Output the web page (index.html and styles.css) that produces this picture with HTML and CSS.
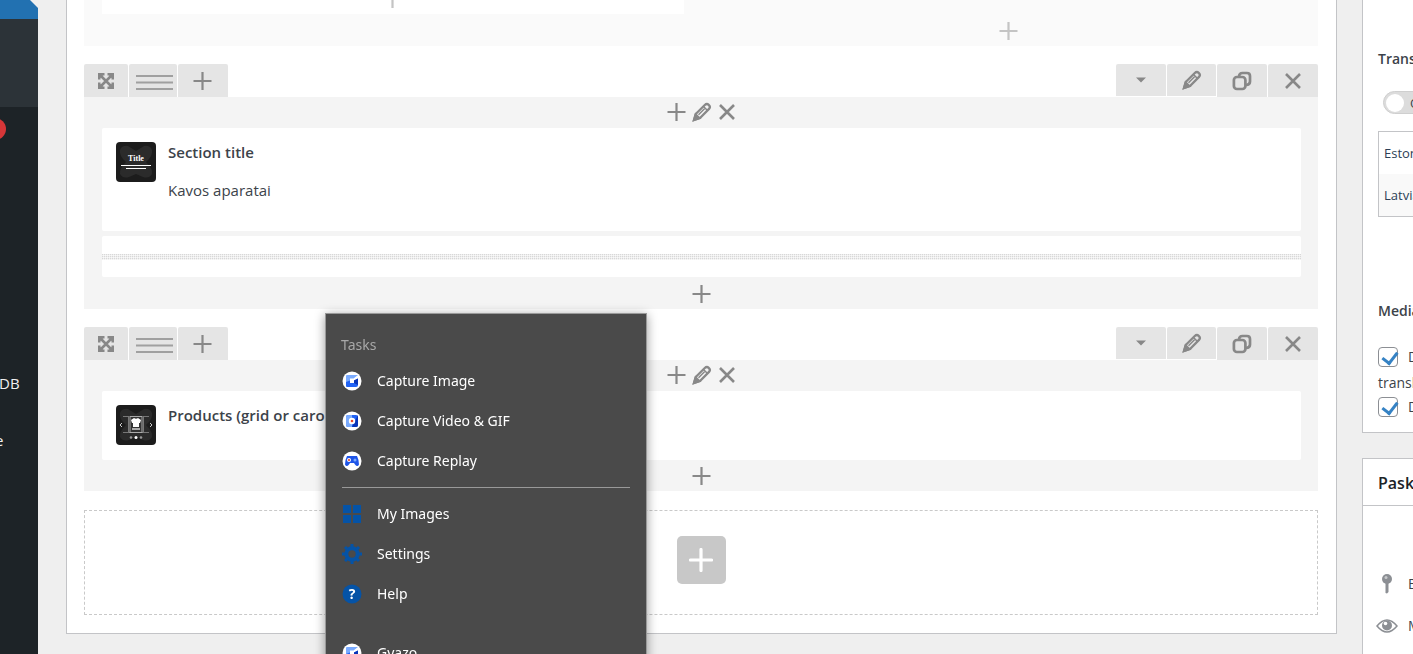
FILE: index.html
```html
<!DOCTYPE html>
<html lang="lt">
<head>
<meta charset="utf-8">
<title>Page builder</title>
<link rel="stylesheet" href="styles.css">
</head>
<body>
<svg class="sprite" aria-hidden="true">
  <symbol id="plus" viewBox="0 0 20 20"><path d="M9.500 1v18M.5 10h18" fill="none" stroke="currentColor" stroke-width="2.200"/></symbol>
  <symbol id="close" viewBox="0 0 20 20"><path d="M3 3l14 14M17 3L3 17" fill="none" stroke="currentColor" stroke-width="2.600"/></symbol>
  <symbol id="pencil" viewBox="0 0 20 20"><path d="M2 18l1.700-6L12.800 3q2-2 3.900-.2 2.200 2 .3 4.100L8 16z" fill="none" stroke="currentColor" stroke-width="2.300"/><path d="M1.500 18.500l2-6.500 4.500 4.300zM11.500 4.500l4 4M6.500 12.800l6-6" stroke="currentColor" stroke-width="1.500" fill="currentColor"/></symbol>
  <symbol id="copy" viewBox="0 0 20 20"><rect x="1.900" y="6" width="11.500" height="12" rx="3" fill="none" stroke="currentColor" stroke-width="2.700"/><path d="M7 5.500Q7.200 2 10.500 2H15q3 0 3 3v5.500q0 3.200-4 3.500" fill="none" stroke="currentColor" stroke-width="2.700"/></symbol>
  <symbol id="caret" viewBox="0 0 20 20"><path d="M5 7.500h10l-5 5z" fill="currentColor"/></symbol>
  <symbol id="expand" viewBox="0 0 20 20"><path d="M4 4l12 12M16 4L4 16" stroke="currentColor" stroke-width="2.600"/><path d="M2 8.500V2h6.500v2.500H7L4.500 7v1.500zM11.500 2H18v6.500h-2.500V7L13 4.500h-1.500zM2 11.500V18h6.500v-2.500H7L4.500 13v-1.500zM18 11.500V18h-6.500v-2.500H13l2.500-2.500v-1.500z" fill="currentColor"/></symbol>
  <symbol id="rows" viewBox="0 0 38 16"><path d="M1 2h37M1 8.500h37M1 15h37" stroke="#a0a0a0" stroke-width="2"/></symbol>
  <symbol id="bow" viewBox="0 0 40 40"><path d="M4 8q2-5 8-4l8 5 8-5q6-1 8 4 1 6-6 12 7 7 6 12-3 5-9 3l-7-3-7 3q-6 2-9-3-1-5 6-12-7-6-6-12z" fill="#2b2b2b"/></symbol>
  <symbol id="gyazo" viewBox="0 0 20 20"><circle cx="10" cy="10" r="9.500" fill="#fff"/><path d="M4 5q0-1 1-1h11l-4.500 3.500H8V12l-4 3z" fill="#7aabff"/><path d="M4 11l4-1.500V12h4V9.500l4-2V14q0 2-2 2H5q-1 0-1-1z" fill="#2264f5"/><path d="M12 9.500l4-2V14l-4-2z" fill="#0a35b8"/></symbol>
</svg>
<div class="page">
  <nav class="sidebar" aria-label="Admin">
    <div class="current"></div>
    <div class="submenu"></div>
    <div class="rest">
      <span class="count"></span>
      <a class="nav-db" href="#">DB</a>
      <a class="nav-e" href="#">e</a>
    </div>
  </nav>

  <main class="builder">
    <section class="split">
      <div class="split-col"><div class="split-card"><button class="ic faint" aria-label="Add"><svg><use href="#plus"/></svg></button></div></div>
      <div class="split-col end"><button class="ic faint" aria-label="Add"><svg><use href="#plus"/></svg></button></div>
    </section>

    <section class="row">
      <div class="tools">
        <button class="tool move" aria-label="Move"><svg><use href="#expand"/></svg></button>
        <button class="tool layout" aria-label="Columns"><svg><use href="#rows"/></svg></button>
        <button class="tool" aria-label="Add"><svg><use href="#plus"/></svg></button>
        <span class="spacer"></span>
        <button class="tool short" aria-label="Toggle"><svg><use href="#caret"/></svg></button>
        <button class="tool short edit" aria-label="Edit"><svg><use href="#pencil"/></svg></button>
        <button class="tool" aria-label="Clone"><svg><use href="#copy"/></svg></button>
        <button class="tool" aria-label="Delete"><svg><use href="#close"/></svg></button>
      </div>
      <div class="column">
        <div class="controls">
          <button class="ic" aria-label="Add"><svg><use href="#plus"/></svg></button>
          <button class="ic" aria-label="Edit"><svg><use href="#pencil"/></svg></button>
          <button class="ic" aria-label="Delete"><svg><use href="#close"/></svg></button>
        </div>
        <article class="card tall">
          <svg class="thumb" viewBox="0 0 40 40"><rect width="40" height="40" rx="4" fill="#1c1c1c"/><use href="#bow"/><text class="thumb-text" x="20" y="19" text-anchor="middle">Title</text><path d="M5 23.500h30M10 26.500h20" stroke="#fff"/></svg>
          <div><h4>Section title</h4><p>Kavos aparatai</p></div>
        </article>
        <div class="divider"><span></span></div>
        <div class="foot"><button class="ic" aria-label="Add"><svg><use href="#plus"/></svg></button></div>
      </div>
    </section>

    <section class="row">
      <div class="tools">
        <button class="tool move" aria-label="Move"><svg><use href="#expand"/></svg></button>
        <button class="tool layout" aria-label="Columns"><svg><use href="#rows"/></svg></button>
        <button class="tool" aria-label="Add"><svg><use href="#plus"/></svg></button>
        <span class="spacer"></span>
        <button class="tool short" aria-label="Toggle"><svg><use href="#caret"/></svg></button>
        <button class="tool short edit" aria-label="Edit"><svg><use href="#pencil"/></svg></button>
        <button class="tool" aria-label="Clone"><svg><use href="#copy"/></svg></button>
        <button class="tool" aria-label="Delete"><svg><use href="#close"/></svg></button>
      </div>
      <div class="column">
        <div class="controls">
          <button class="ic" aria-label="Add"><svg><use href="#plus"/></svg></button>
          <button class="ic" aria-label="Edit"><svg><use href="#pencil"/></svg></button>
          <button class="ic" aria-label="Delete"><svg><use href="#close"/></svg></button>
        </div>
        <article class="card">
          <svg class="thumb" viewBox="0 0 40 40"><rect width="40" height="40" rx="4" fill="#1c1c1c"/><use href="#bow"/><path d="M7 11.500h6M27 11.500h6M7 27.500h26M12.500 11v17M27.500 11v17" stroke="#777"/><rect x="14" y="11.500" width="12" height="16" fill="#333" stroke="#aaa"/><path d="M15 15l3-2q2 1.500 4 0l3 2-1 3h-1v4h-6v-4h-1z" fill="#fff"/><path d="M16 24h8" stroke="#aaa" stroke-width="2"/><path d="M6 18l-2 2 2 2M34 18l2 2-2 2" stroke="#ccc" fill="none"/><circle cx="15" cy="32.500" r="1.300" fill="#999"/><circle cx="20" cy="32.500" r="1.500" fill="#fff"/><circle cx="25" cy="32.500" r="1.300" fill="#999"/></svg>
          <div><h4>Products (grid or carousel)</h4></div>
        </article>
        <div class="foot"><button class="ic" aria-label="Add"><svg><use href="#plus"/></svg></button></div>
      </div>
    </section>

    <div class="drop"><button class="add" aria-label="Add element"><svg viewBox="0 0 24 24"><path d="M12 1.500v21M1.500 12h21" stroke="#fff" stroke-width="3.200" stroke-linecap="round"/></svg></button></div>
  </main>

  <aside class="side">
    <section class="panel languages">
      <h4>Translate</h4>
      <label class="switch"><input type="checkbox" role="switch"><span>Off</span></label>
      <table><tbody><tr><td>Estonian</td></tr><tr><td>Latvian</td></tr></tbody></table>
      <h4 class="media">Media</h4>
      <label class="check"><input type="checkbox" checked><span>Duplicate</span></label>
      <p>translations</p>
      <label class="check"><input type="checkbox" checked><span>Duplicate</span></label>
    </section>
    <section class="panel publish">
      <h2>Paskelbti</h2>
      <div class="meta"><svg viewBox="0 0 22 22"><circle cx="11" cy="6" r="5" fill="#8c8f94"/><path d="M9.500 10h3v9L11 20.500 9.500 20z" fill="#8c8f94"/><circle cx="10" cy="4.500" r="1.500" fill="#c8cacc"/></svg><span>Būsena</span></div>
      <div class="meta"><svg viewBox="0 0 22 22"><path d="M1 11Q11-1 21 11 11 23 1 11z" fill="none" stroke="#8c8f94" stroke-width="1.500"/><circle cx="11" cy="10.500" r="5" fill="#8c8f94"/><circle cx="9.500" cy="8.500" r="1.800" fill="#fff"/></svg><span>Matomumas</span></div>
    </section>
  </aside>
</div>

<div class="jumplist" role="menu">
  <h3>Tasks</h3>
  <button role="menuitem"><svg><use href="#gyazo"/></svg>Capture Image</button>
  <button role="menuitem"><svg viewBox="0 0 20 20"><circle cx="10" cy="10" r="9.500" fill="#fff"/><rect x="4" y="4" width="12" height="12" rx="2" fill="#2264f5"/><path d="M4 6q0-2 2-2h4v12H6q-2 0-2-2z" fill="#7aabff"/><path d="M10 16h4q2 0 2-2V4z" fill="#0a35b8"/><circle cx="10" cy="10" r="3.200" fill="#fff"/><circle cx="10" cy="10" r="1.300" fill="#e8462c"/></svg>Capture Video &amp; GIF</button>
  <button role="menuitem"><svg viewBox="0 0 20 20"><circle cx="10" cy="10" r="9.500" fill="#fff"/><path d="M5 5h10q2 4 2 8.500-1.500 3-4 0L12 12H8l-1 1.500q-2.500 3-4 0Q3 9 5 5z" fill="#1f55e8"/><circle cx="7" cy="9" r="2" fill="#fff"/><circle cx="7" cy="9" r="1.100" fill="#e8462c"/><circle cx="13" cy="9" r="1.500" fill="#7aabff"/></svg>Capture Replay</button>
  <hr>
  <button role="menuitem"><svg viewBox="0 0 20 20"><path d="M1 1h8v8H1zM11 1h8v8h-8zM1 11h8v8H1zM11 11h8v8h-8z" fill="#0553a6"/></svg>My Images</button>
  <button role="menuitem"><svg viewBox="0 0 20 20"><circle cx="10" cy="10" r="5.700" fill="none" stroke="#0553a6" stroke-width="4"/><path d="M10 0v4M10 16v4M0 10h4M16 10h4M3 3l3 3M14 14l3 3M17 3l-3 3M6 14l-3 3" stroke="#0553a6" stroke-width="3"/></svg>Settings</button>
  <button role="menuitem"><svg viewBox="0 0 20 20"><circle cx="10" cy="10" r="9.500" fill="#0553a6"/><text class="q" x="10" y="15" text-anchor="middle">?</text></svg>Help</button>
  <button class="app" role="menuitem"><svg><use href="#gyazo"/></svg>Gyazo</button>
</div>
</body>
</html>
```
FILE: styles.css
```css
* { box-sizing: border-box; }
body { margin: 0; background: #efefef; color: #3c434a; font: 14px/20px "Segoe UI", "Open Sans", "Noto Sans", sans-serif; }
h2, h3, h4, p { margin: 0; }
button { border: 0; padding: 0; background: none; color: inherit; font: inherit; }
button svg { display: block; }
.sprite { position: absolute; width: 0; height: 0; }

.page { display: flex; height: 100vh; overflow: hidden; align-items: flex-start; }

.sidebar { flex: 0 0 38px; align-self: stretch; display: flex; flex-direction: column; overflow: hidden; background: linear-gradient(#efefef 19px, #1d2327 19px); }
.current { height: 19px; background: #2271b1; clip-path: polygon(0 0, 30px 0, 38px 8px, 38px 19px, 0 19px); }
.submenu { height: 88px; background: #2c3338; }
.rest { display: flex; flex-direction: column; align-items: flex-start; padding-top: 11px; }
.count { width: 22px; height: 22px; margin-left: -16px; border-radius: 50%; background: #d63638; }
.rest a { color: #f0f0f1; font-size: 15px; line-height: 20px; text-decoration: none; }
.nav-db { margin: 233px 0 0 -1px; }
.nav-e { margin: 37px 0 0 -5px; }

.builder { flex: 1; min-width: 0; margin-left: 28px; padding: 0 18px 18px 17px; background: #fff; border: solid #c3c4c7; border-width: 0 1px 1px; }
.split { display: grid; grid-template-columns: 1fr 1fr; gap: 35px; height: 46px; padding: 0 18px; background: #fafafa; }
.split-card { display: flex; justify-content: center; align-items: flex-end; height: 14px; padding-bottom: 5px; overflow: hidden; background: #fff; }
.end { display: flex; justify-content: center; align-items: flex-end; padding-bottom: 5px; }
.ic { width: 20px; height: 20px; color: #888; }
.ic svg { width: 20px; height: 20px; }
.faint { color: #c4c4c4; }

.row { margin-top: 18px; }
.tools { display: flex; gap: 1px; height: 33px; }
.tool { display: flex; align-items: center; justify-content: center; width: 50px; height: 33px; color: #888; background: #e5e5e5; border-radius: 2px 2px 0 0; }
.tool svg { width: 20px; height: 20px; }
.move { width: 44px; }
.layout { width: 48px; }
.layout svg { width: 38px; height: 16px; margin: 2px 0 0 1px; }
.short { height: 32px; }
.edit { width: 49px; }
.spacer { flex: 1; }
.column { padding: 0 17px 0 18px; background: #f4f4f4; }
.controls { display: flex; justify-content: center; align-items: flex-start; gap: 5px; height: 31px; padding-top: 5px; }
.card { display: flex; gap: 12px; padding: 14px; background: #fff; border-radius: 2px; min-height: 69px; }
.tall { min-height: 103px; }
.thumb { flex: none; width: 40px; height: 40px; }
.thumb-text { font: bold 8px "Liberation Serif", serif; fill: #fff; }
.card h4 { font-size: 15px; line-height: 20px; font-weight: 600; }
.card p { margin-top: 18px; font-size: 15px; line-height: 20px; }
.divider { display: flex; align-items: center; height: 41px; margin-top: 5px; background: #fff; border-radius: 2px; }
.divider span { flex: 1; height: 6px; background: repeating-linear-gradient(90deg, transparent 0 1px, rgba(255, 255, 255, .6) 1px 2px), repeating-linear-gradient(#d8d8d8 0 1px, #f0f0f0 1px 2px); }
.foot { display: flex; justify-content: center; align-items: flex-start; height: 31px; padding-top: 6px; }
.divider + .foot { height: 32px; padding-top: 7px; }
.drop { display: flex; align-items: center; justify-content: center; height: 105px; margin-top: 19px; border: 1px dashed #c9c9c9; }
.add { display: flex; align-items: center; justify-content: center; width: 49px; height: 48px; margin-bottom: 5px; background: #c8c8c8; border-radius: 5px; }
.add svg { width: 24px; height: 24px; }

.side { flex: 0 0 51px; margin-left: 25px; overflow: hidden; white-space: nowrap; }
.panel { width: 280px; background: #fff; border: 1px solid #c3c4c7; }
.languages { height: 433px; padding: 49px 15px 0; border-top: 0; }
.panel h4 { font-size: 14px; line-height: 20px; font-weight: 600; }
.switch { display: flex; align-items: center; width: 70px; height: 23px; margin: 22px 0 0 5px; padding-left: 2px; gap: 6px; background: #dcdcdc; border: 1px solid #cfcfcf; border-radius: 12px; }
.switch input { appearance: none; flex: none; width: 18px; height: 18px; margin: 0; background: #fff; border-radius: 50%; }
.switch span { font-size: 13px; }
.languages table { width: 248px; height: 86px; margin-top: 17px; border: 1px solid #c3c4c7; border-spacing: 0; font-size: 13px; }
.languages td { height: 42px; padding: 0 5px; color: #2c3f56; }
.languages tr + tr { background: #f9f9f9; }
.panel .media { margin-top: 84px; }
.check { display: flex; align-items: center; gap: 10px; height: 20px; }
.media + .check { margin-top: 26px; }
.languages p { margin: 6px 0 4px; }
.check input { appearance: none; flex: none; width: 20px; height: 20px; margin: 0; background: #fff; border: 1px solid #8c8f94; border-radius: 4px; }
.check input:checked::before { content: ""; display: block; width: 7px; height: 12px; margin: 1px 0 0 6px; border: solid #3582c4; border-width: 0 3px 3px 0; transform: rotate(38deg); }
.publish { margin-top: 25px; padding-bottom: 60px; }
.publish h2 { height: 47px; padding-left: 15px; border-bottom: 1px solid #c3c4c7; color: #1d2327; font-size: 16px; line-height: 48px; font-weight: 600; }
.meta { display: flex; align-items: center; gap: 10px; margin: 20px 0 0 13px; height: 22px; }
h2 + .meta { margin-top: 67px; }
.meta svg { width: 22px; height: 22px; flex: none; }

.jumplist { position: fixed; left: 325px; top: 313px; bottom: -40px; width: 322px; padding: 20px 15px 0; background: #4a4a4a; border: 1px solid #9a9a9a; color: #fff; font-size: 14px; font-family: "Segoe UI", "Noto Sans", sans-serif; box-shadow: 0 2px 10px rgba(0, 0, 0, .4); }
.jumplist h3 { height: 27px; color: #a8a8a8; font-size: 14px; font-weight: 400; line-height: 22px; }
.jumplist button { display: flex; align-items: center; gap: 15px; width: 100%; height: 40px; padding-left: 1px; text-align: left; }
.jumplist button svg { flex: none; width: 20px; height: 20px; }
.jumplist hr { height: 1px; margin: 6px 1px; border: 0; background: #999; }
.jumplist .app { margin-top: 19px; }
.q { fill: #fff; font: bold 14px "Open Sans", sans-serif; }
```
